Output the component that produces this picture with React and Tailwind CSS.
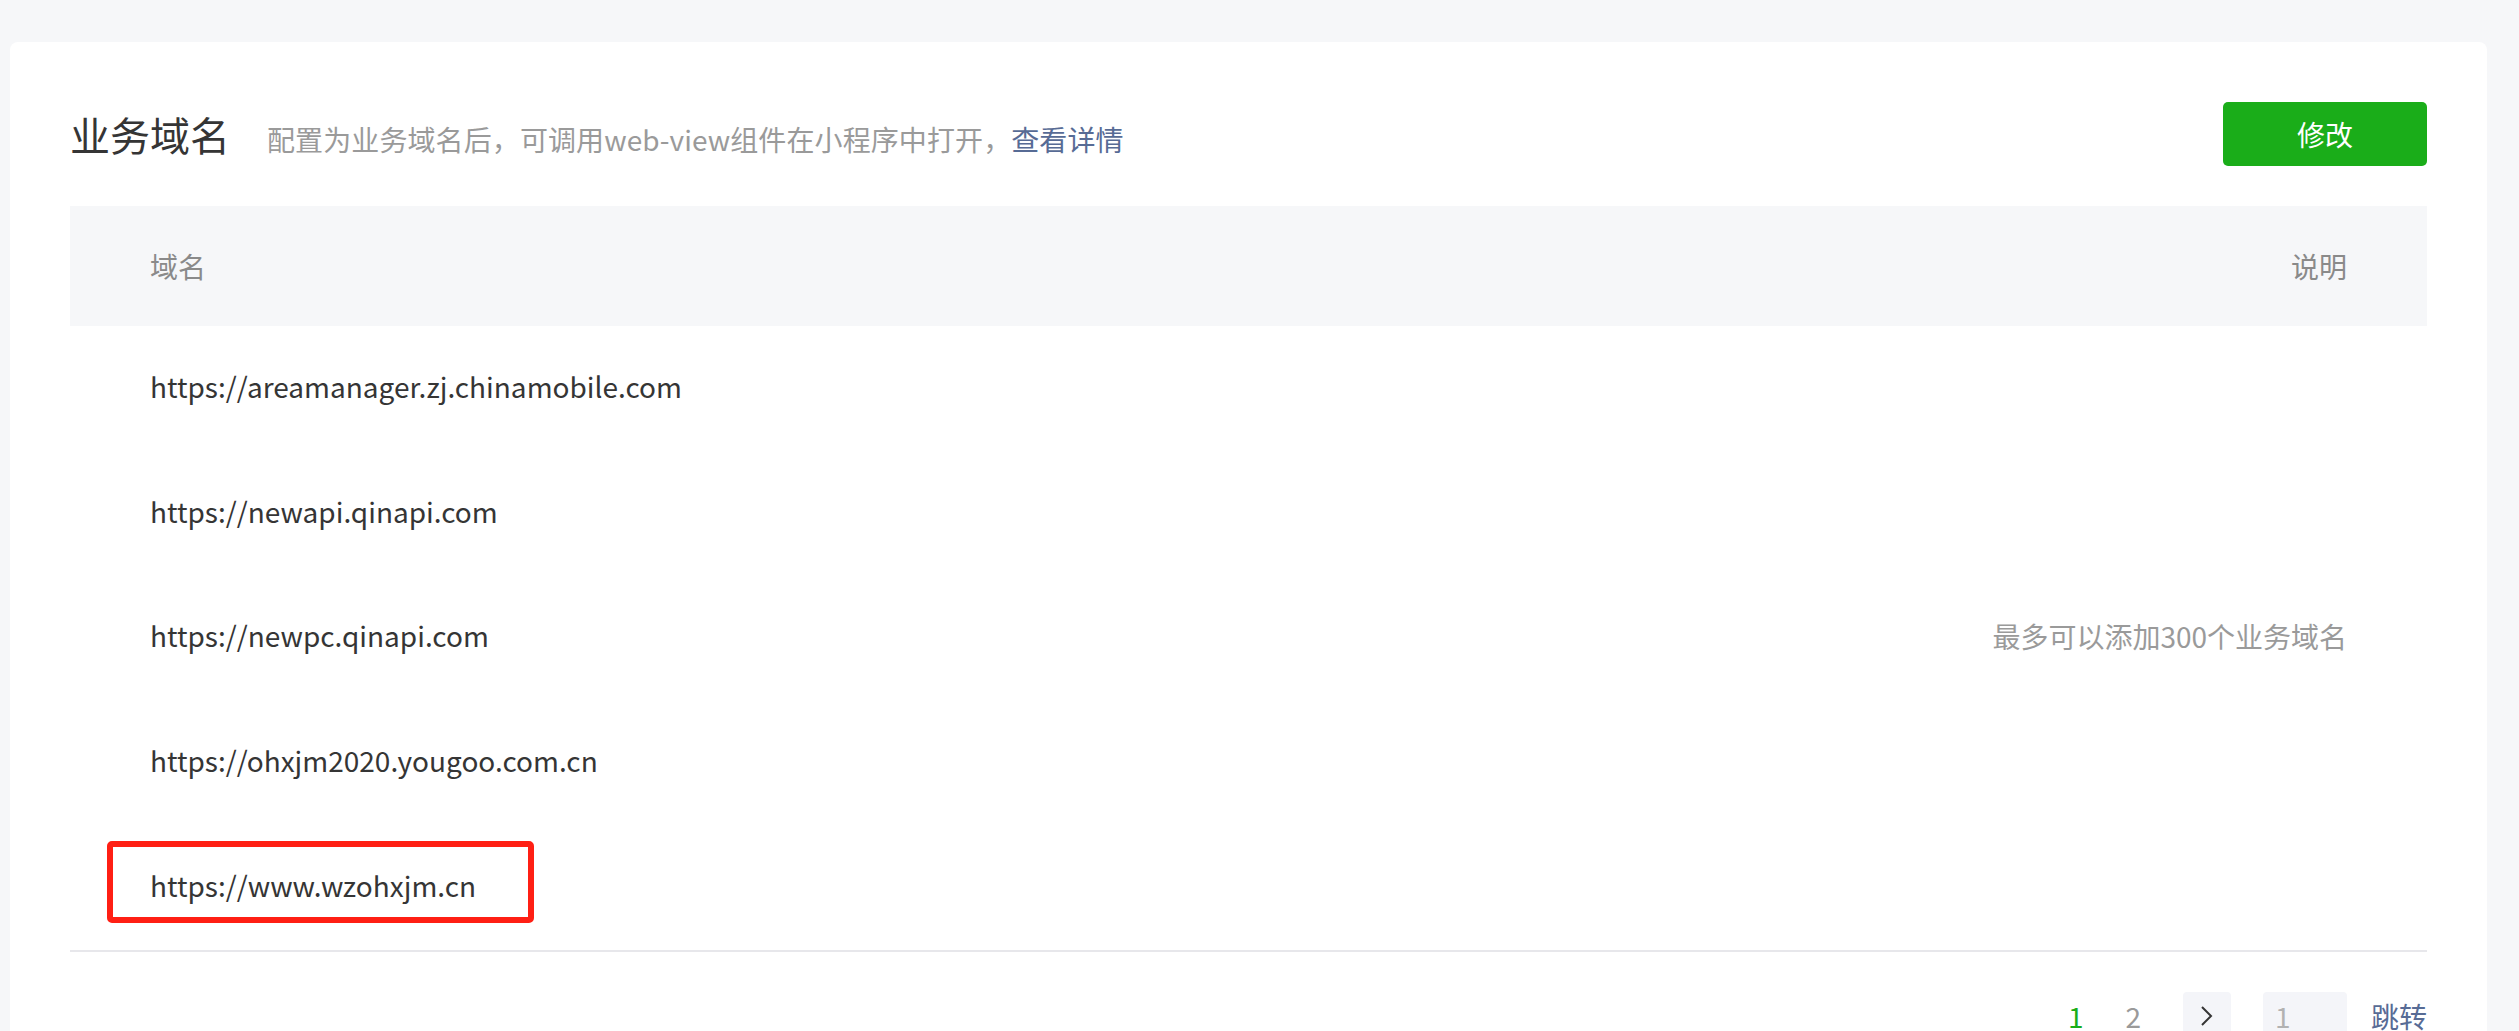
import React from "react";

const domains = [
  "https://areamanager.zj.chinamobile.com",
  "https://newapi.qinapi.com",
  "https://newpc.qinapi.com",
  "https://ohxjm2020.yougoo.com.cn",
  "https://www.wzohxjm.cn",
];

const App = () => {
  return (
    <div
      className="min-h-screen bg-[#f6f7f9] pt-[42px] pl-[10px] pr-[32px]"
      style={{ fontFamily: '"Noto Sans CJK SC", "Noto Sans", sans-serif' }}
    >
      <div className="bg-white rounded-[8px] px-[60px] pt-[60px] pb-[60px]">
        {/* title row */}
        <div className="flex items-center justify-between h-[64px]">
          <div className="flex items-baseline">
            <h2 className="text-[40px] leading-none text-[#353535] font-normal">
              业务域名
            </h2>
            <p className="ml-[37px] text-[28px] leading-none text-[#9a9a9a] tracking-[0.1px]">
              配置为业务域名后，可调用web-view组件在小程序中打开，
              <a className="text-[#576b95]">查看详情</a>
            </p>
          </div>
          <button className="w-[204px] h-[64px] rounded-[5px] bg-[#1aad19] text-white text-[28px]">
            修改
          </button>
        </div>

        {/* table */}
        <div className="mt-[40px]">
          <div className="h-[120px] bg-[#f6f7f9] flex items-center justify-between px-[80px] text-[28px] text-[#8a8a8a]">
            <span>域名</span>
            <span>说明</span>
          </div>
          <div className="flex border-b-2 border-[#e7e7eb]">
            <div className="flex-1">
              {domains.map((d, i) => (
                <div
                  key={d}
                  className="relative h-[124.8px] flex items-center pl-[80px] pb-[5px] text-[28px] text-[#353535]"
                >
                  {d}
                  {i === domains.length - 1 && (
                    <div className="absolute left-[37px] top-[16px] w-[427px] h-[82px] border-[6px] border-[#ff1f14] rounded-[5px]" />
                  )}
                </div>
              ))}
            </div>
            <div className="flex items-center pr-[80px] pb-[3px] text-[28px] text-[#9a9a9a]">
              最多可以添加300个业务域名
            </div>
          </div>

          {/* pagination */}
          <div className="flex justify-end items-center mt-[40px] h-[48px] text-[28px]">
            <span className="text-[#1aad19] mr-[42px]">1</span>
            <span className="text-[#9a9a9a] mr-[42px]">2</span>
            <span className="w-[48px] h-[48px] rounded-[4px] bg-[#f4f5f9] flex items-center justify-center mr-[32px]">
              <svg width="14" height="22" viewBox="0 0 14 22" fill="none">
                <path d="M2 2 L11 11 L2 20" stroke="#353535" strokeWidth="2" />
              </svg>
            </span>
            <span className="w-[84px] h-[48px] rounded-[4px] bg-[#f4f5f9] flex items-center pl-[12px] text-[#b2b2b2] mr-[24px]">
              1
            </span>
            <a className="text-[#576b95]">跳转</a>
          </div>
        </div>
      </div>
    </div>
  );
};

export default App;
